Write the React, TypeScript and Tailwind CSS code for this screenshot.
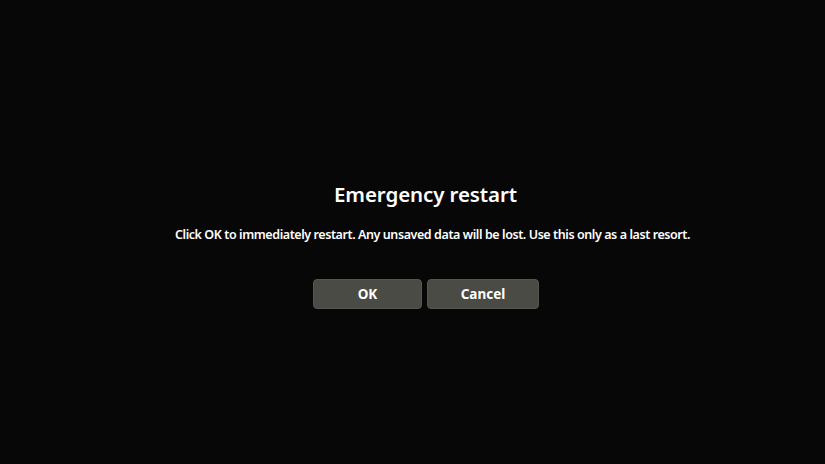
import React from 'react';

const DialogButton: React.FC<{ label: string; width: string }> = ({ label, width }) => (
  <button
    className={`${width} h-[30px] rounded-[4px] bg-[#4b4b46] border border-[#55554f] text-white text-[13.5px] font-bold`}
  >
    {label}
  </button>
);

export default function App() {
  return (
    <div
      className="w-[825px] h-[464px] bg-[#070707] flex flex-col items-center pl-[26px] text-white"
      style={{ fontFamily: '"Noto Sans", "Open Sans", sans-serif' }}
    >
      <h1 className="mt-[180px] text-[20.5px] leading-[28px] font-semibold tracking-[-0.1px]">
        Emergency restart
      </h1>
      <p className="mt-[18px] ml-[14px] text-[12.5px] leading-[18px] font-semibold tracking-[-0.42px]">
        Click OK to immediately restart. Any unsaved data will be lost. Use this only as a last resort.
      </p>
      <div className="mt-[35px] flex gap-[5px] ml-[1px]">
        <DialogButton label="OK" width="w-[109px]" />
        <DialogButton label="Cancel" width="w-[112px]" />
      </div>
    </div>
  );
}
